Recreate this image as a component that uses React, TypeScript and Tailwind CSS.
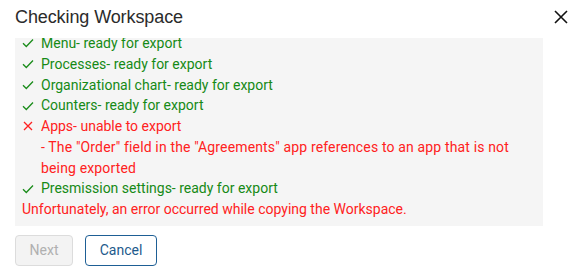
import React from 'react';

type Item = {
  ok: boolean;
  label: string;
  status: string;
  details?: string[];
};

const items: Item[] = [
  { ok: true, label: 'Menu', status: 'ready for export' },
  { ok: true, label: 'Processes', status: 'ready for export' },
  { ok: true, label: 'Organizational chart', status: 'ready for export' },
  { ok: true, label: 'Counters', status: 'ready for export' },
  {
    ok: false,
    label: 'Apps',
    status: 'unable to export',
    details: ['- The "Order" field in the "Agreements" app references to an app that is not being exported'],
  },
  { ok: true, label: 'Presmission settings', status: 'ready for export' },
];

const Check = () => (
  <svg width="12" height="10" viewBox="0 0 12 10" fill="none" className="shrink-0">
    <path d="M1 5.2 L4.3 8.5 L11 1.5" stroke="#1a8c1a" strokeWidth="1.3" />
  </svg>
);

const Cross = () => (
  <svg width="10" height="10" viewBox="0 0 10 10" fill="none" className="shrink-0">
    <path d="M1 1 L9 9 M9 1 L1 9" stroke="#ff2121" strokeWidth="1.3" />
  </svg>
);

export default function App() {
  return (
    <div className="w-[568px] h-[269px] bg-white relative overflow-hidden font-['Roboto',sans-serif]">
      {/* header */}
      <div className="flex items-center justify-between pl-[15px] h-[34px]">
        <h2 className="text-[18px] text-[#2b2b2b] font-['Liberation_Sans',Arial,sans-serif] tracking-[-0.1px]">
          Checking Workspace
        </h2>
        <svg width="14" height="14" viewBox="0 0 14 14" fill="none">
          <path d="M1 1 L13 13 M13 1 L1 13" stroke="#111" strokeWidth="1.6" />
        </svg>
      </div>

      {/* log panel */}
      <div className="ml-[15px] mt-[4px] w-[528px] h-[188px] bg-[#f5f5f5] overflow-hidden">
        <div className="-mt-[5px] pl-[7px] pr-[4px] text-[14px] leading-[20.75px]">
          {items.map((it) => (
            <div key={it.label}>
              <div className={`flex items-center gap-[7px] ${it.ok ? 'text-[#168a16]' : 'text-[#ff2121]'}`}>
                <span className="w-[12px] flex justify-center">{it.ok ? <Check /> : <Cross />}</span>
                <span>
                  {it.label}- {it.status}
                </span>
              </div>
              {it.details?.map((d) => (
                <div key={d} className="pl-[19px] pr-[20px] tracking-[0.15px] text-[#ff2121]">
                  {d}
                </div>
              ))}
            </div>
          ))}
          <div className="text-[#ff2121]">Unfortunately, an error occurred while copying the Workspace.</div>
        </div>
      </div>

      {/* footer */}
      <div className="flex gap-[12px] ml-[15px] mt-[9px]">
        <button
          disabled
          className="w-[58px] h-[31px] rounded-[4px] border border-[#dcdcdc] bg-[#f3f3f3] text-[#b0b0b0] text-[14px]"
        >
          Next
        </button>
        <button className="w-[72px] h-[31px] rounded-[4px] border border-[#1e5f95] bg-white text-[#1e5a8c] text-[14px]">
          Cancel
        </button>
      </div>
    </div>
  );
}
